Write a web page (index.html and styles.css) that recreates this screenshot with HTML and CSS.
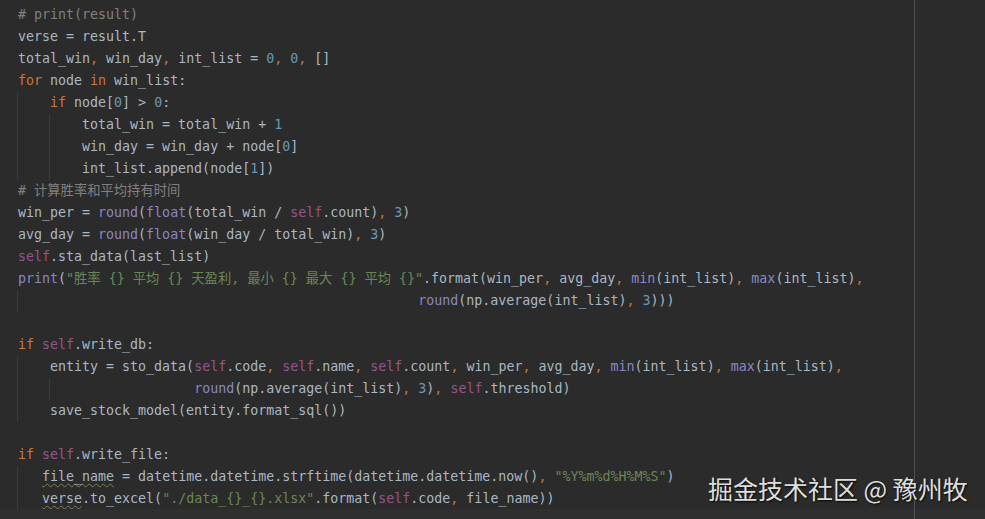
FILE: index.html
```html
<!DOCTYPE html>
<html lang="zh">
<head>
<meta charset="utf-8">
<title>editor</title>
<link rel="stylesheet" href="styles.css">
</head>
<body>
<div class="ide">
  <div class="code">
<div class="ln"><span class="c"># print(result)</span></div>
<div class="ln">verse = result.T</div>
<div class="ln">total_win<span class="k">,</span> win_day<span class="k">,</span> int_list = <span class="n">0</span><span class="k">,</span> <span class="n">0</span><span class="k">,</span> []</div>
<div class="ln"><span class="k">for</span> node <span class="k">in</span> win_list:</div>
<div class="ln g1">    <span class="k">if</span> node[<span class="n">0</span>] &gt; <span class="n">0</span>:</div>
<div class="ln g2">        total_win = total_win + <span class="n">1</span></div>
<div class="ln g2">        win_day = win_day + node[<span class="n">0</span>]</div>
<div class="ln g2">        int_list.append(node[<span class="n">1</span>])</div>
<div class="ln"><span class="c"># 计算胜率和平均持有时间</span></div>
<div class="ln">win_per = <span class="b">round</span>(<span class="b">float</span>(total_win / <span class="s">self</span>.count)<span class="k">,</span> <span class="n">3</span>)</div>
<div class="ln">avg_day = <span class="b">round</span>(<span class="b">float</span>(win_day / total_win)<span class="k">,</span> <span class="n">3</span>)</div>
<div class="ln"><span class="s">self</span>.sta_data(last_list)</div>
<div class="ln"><span class="b">print</span>(<span class="str">"胜率 {} 平均 {} 天盈利, 最小 {} 最大 {} 平均 {}"</span>.format(win_per<span class="k">,</span> avg_day<span class="k">,</span> <span class="b">min</span>(int_list)<span class="k">,</span> <span class="b">max</span>(int_list)<span class="k">,</span></div>
<div class="ln g1">                                                  <span class="b">round</span>(np.average(int_list)<span class="k">,</span> <span class="n">3</span>)))</div>
<div class="ln"> </div>
<div class="ln"><span class="k">if</span> <span class="s">self</span>.write_db:</div>
<div class="ln g1">    entity = sto_data(<span class="s">self</span>.code<span class="k">,</span> <span class="s">self</span>.name<span class="k">,</span> <span class="s">self</span>.count<span class="k">,</span> win_per<span class="k">,</span> avg_day<span class="k">,</span> <span class="b">min</span>(int_list)<span class="k">,</span> <span class="b">max</span>(int_list)<span class="k">,</span></div>
<div class="ln g2">                      <span class="b">round</span>(np.average(int_list)<span class="k">,</span> <span class="n">3</span>)<span class="k">,</span> <span class="s">self</span>.threshold)</div>
<div class="ln g1">    save_stock_model(entity.format_sql())</div>
<div class="ln"> </div>
<div class="ln"><span class="k">if</span> <span class="s">self</span>.write_file:</div>
<div class="ln g1">   <span class="w">file_name</span> = datetime.datetime.strftime(datetime.datetime.now()<span class="k">,</span> <span class="str">"%Y%m%d%H%M%S"</span>)</div>
<div class="ln g1">   <span class="w">verse</span>.to_excel(<span class="str">"./data_{}_{}.xlsx"</span>.format(<span class="s">self</span>.code<span class="k">,</span> file_name))</div>
  </div>
  <div class="hscroll"></div>
  <div class="watermark">掘金技术社区 @ 豫州牧</div>
</div>
</body>
</html>
```

FILE: styles.css
```css
html, body {
  margin: 0;
  padding: 0;
  background: #2b2b2b;
}

.ide {
  position: relative;
  width: 985px;
  height: 519px;
  overflow: hidden;
  background-color: #2b2b2b;
  background-image: linear-gradient(#525252, #525252);
  background-size: 1px 100%;
  background-position: 914px 0;
  background-repeat: no-repeat;
  display: flex;
  flex-direction: column;
}

.code {
  height: 509px;
  flex: none;
  padding-top: 4px;
  box-sizing: border-box;
  overflow: hidden;
  font-family: "DejaVu Sans Mono", "Noto Sans CJK SC", monospace;
  font-size: 13.3px;
  line-height: 22px;
  color: #a9b7c6;
}

.ln {
  height: 22px;
  padding-left: 18px;
  white-space: pre;
}

.g1 {
  background-image: linear-gradient(#3a3a3a, #3a3a3a);
  background-size: 1px 100%;
  background-position: 17px 0;
  background-repeat: no-repeat;
}

.g2 {
  background-image: linear-gradient(#3a3a3a, #3a3a3a), linear-gradient(#3a3a3a, #3a3a3a);
  background-size: 1px 100%, 1px 100%;
  background-position: 17px 0, 49px 0;
  background-repeat: no-repeat;
}

.c { color: #808080; }
.k { color: #cc7832; }
.n { color: #6897bb; }
.s { color: #94558d; }
.b { color: #8888c6; }
.str { color: #6a8759; }

.w {
  text-decoration: underline wavy #7f7f55;
  text-decoration-thickness: 1px;
  text-underline-offset: 2px;
}

.hscroll {
  height: 10px;
  flex: none;
  background: rgba(255, 255, 255, 0.02);
}

.watermark {
  position: absolute;
  left: 708px;
  top: 473px;
  font-family: "Noto Sans CJK SC", "Noto Sans", sans-serif;
  font-size: 25px;
  line-height: 30px;
  color: #dedede;
  text-shadow: 1px 1px 2px rgba(0, 0, 0, 0.85);
  white-space: nowrap;
}
```
